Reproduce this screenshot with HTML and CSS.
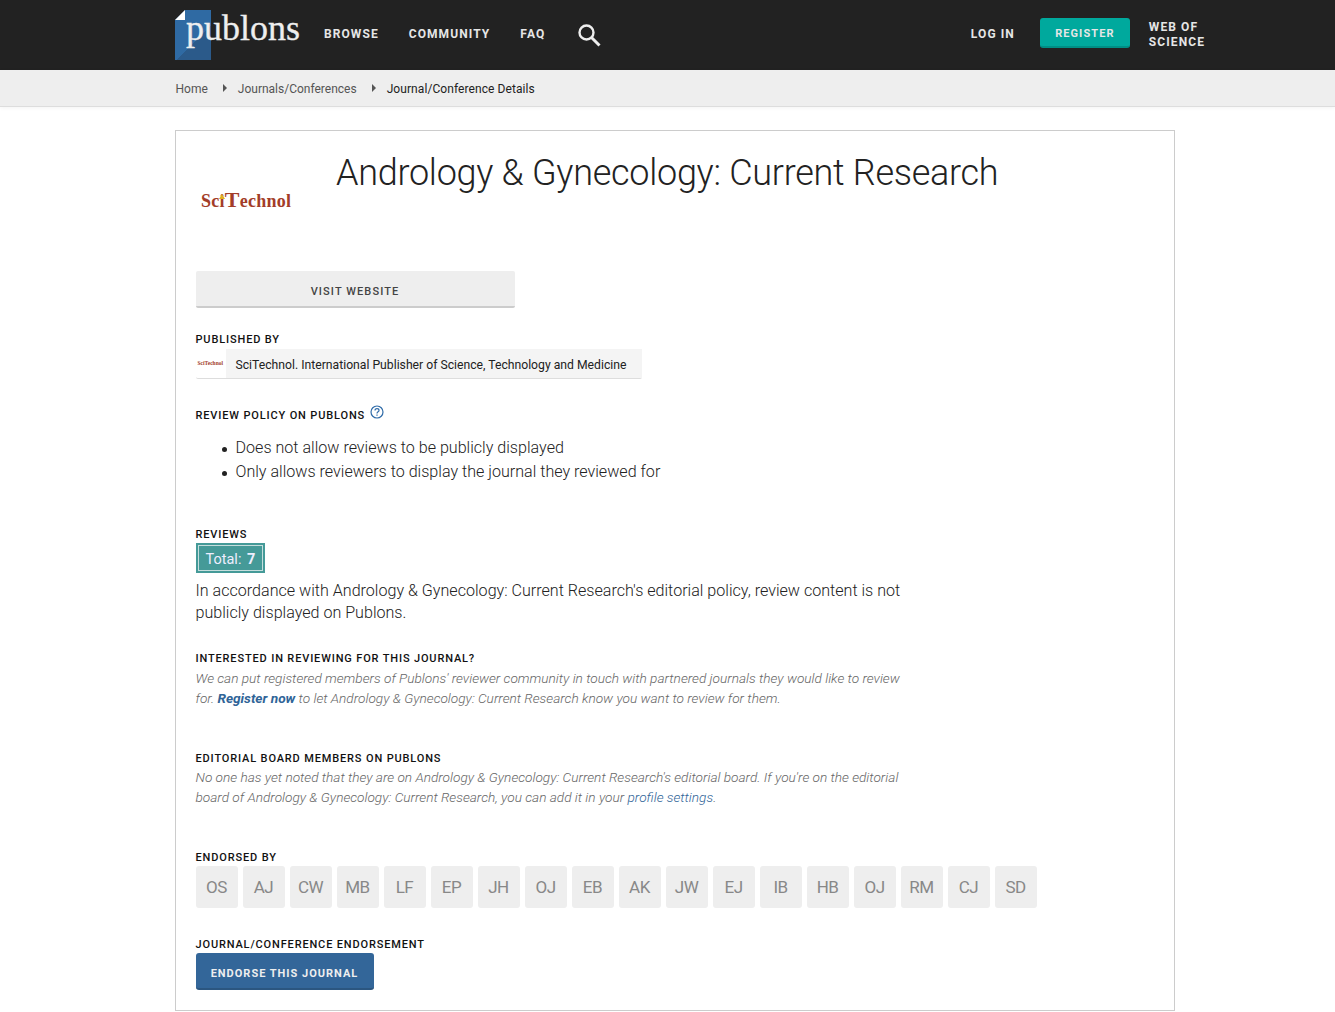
FILE: index.html
```html
<!DOCTYPE html>
<html lang="en">
<head>
    <meta charset="UTF-8">
    <meta name="viewport" content="width=device-width, initial-scale=1.0">
    <title>Andrology &amp; Gynecology: Current Research</title>
    <link rel="stylesheet" href="styles.css">
</head>
<body>

<header class="topbar">
    <div class="container topbar-inner">
        <a class="logo" href="#">
            <span class="logo-mark"></span>
            <span class="logo-text">publons</span>
        </a>
        <nav class="main-nav">
            <a href="#">Browse</a>
            <a href="#">Community</a>
            <a href="#">FAQ</a>
            <svg class="search-icon" width="24" height="24" viewBox="0 0 24 24" fill="none" stroke="#eee" stroke-width="2.4">
                <circle cx="9.5" cy="9.5" r="7"/>
                <path d="M14.5 14.5L22.5 22.5" stroke-width="3"/>
            </svg>
        </nav>
        <div class="user-nav">
            <a class="login" href="#">Log in</a>
            <a class="btn-register" href="#">Register</a>
            <a class="wos" href="#">Web of<br>Science</a>
        </div>
    </div>
</header>

<div class="breadcrumb">
    <div class="container breadcrumb-inner">
        <a href="#">Home</a>
        <span class="crumb-arrow"></span>
        <a href="#">Journals/Conferences</a>
        <span class="crumb-arrow"></span>
        <span class="crumb-current">Journal/Conference Details</span>
    </div>
</div>

<main class="container card">
    <div class="journal-head">
        <div class="journal-logo">
            <span>Sc<span class="logo-i">i</span><span class="logo-t">T</span>echnol</span>
        </div>
        <h1>Andrology &amp; Gynecology: Current Research</h1>
    </div>

    <a class="btn-visit" href="#">Visit website</a>

    <section class="published">
        <h4>Published by</h4>
        <div class="publisher">
            <span class="publisher-logo">SciTechnol</span>
            <span class="publisher-name">SciTechnol. International Publisher of Science, Technology and Medicine</span>
        </div>
    </section>

    <section class="policy">
        <h4>Review policy on Publons
            <svg class="help-icon" width="14" height="14" viewBox="0 0 14 14" fill="none" stroke="#2f6ba8" stroke-width="1.2">
                <circle cx="7" cy="7" r="6"/>
                <path d="M5 5.5C5 4.2 6 3.6 7 3.6S9 4.3 9 5.4C9 6.8 7 6.8 7 8.4"/>
                <path d="M7 9.6V10.8"/>
            </svg>
        </h4>
        <ul>
            <li>Does not allow reviews to be publicly displayed</li>
            <li>Only allows reviewers to display the journal they reviewed for</li>
        </ul>
    </section>

    <section class="reviews">
        <h4>Reviews</h4>
        <div class="total-box"><span>Total: <strong>7</strong></span></div>
        <p class="lead">In accordance with Andrology &amp; Gynecology: Current Research's editorial policy, review content is not publicly displayed on Publons.</p>
    </section>

    <section class="interested">
        <h4>Interested in reviewing for this journal?</h4>
        <p class="note">We can put registered members of Publons' reviewer community in touch with partnered journals they would like to review for. <a class="strong-link" href="#">Register now</a> to let Andrology &amp; Gynecology: Current Research know you want to review for them.</p>
    </section>

    <section class="board">
        <h4>Editorial board members on Publons</h4>
        <p class="note">No one has yet noted that they are on Andrology &amp; Gynecology: Current Research's editorial board. If you're on the editorial board of Andrology &amp; Gynecology: Current Research, you can add it in your <a href="#">profile settings</a>.</p>
    </section>

    <section class="endorsed">
        <h4>Endorsed by</h4>
        <div class="avatars">
            <span>OS</span><span>AJ</span><span>CW</span><span>MB</span><span>LF</span><span>EP</span>
            <span>JH</span><span>OJ</span><span>EB</span><span>AK</span><span>JW</span><span>EJ</span>
            <span>IB</span><span>HB</span><span>OJ</span><span>RM</span><span>CJ</span><span>SD</span>
        </div>
    </section>

    <section class="endorsement">
        <h4>Journal/Conference endorsement</h4>
        <a class="btn-endorse" href="#">Endorse this journal</a>
    </section>
</main>

</body>
</html>
```

FILE: styles.css
```css
* {
    box-sizing: border-box;
}
html, body {
    height: 1012px;
    overflow: hidden;
}
body {
    margin: 0;
    font-family: Roboto, "Liberation Sans", sans-serif;
    font-weight: 300;
    color: #222;
    background-color: #fff;
}
a {
    text-decoration: none;
    color: inherit;
}
.container {
    width: 1000px;
    margin-left: 175px;
}

/* top bar */
.topbar {
    height: 70px;
    background-color: #222;
}
.topbar-inner {
    height: 70px;
    display: flex;
    align-items: center;
}
.logo {
    position: relative;
    display: block;
    width: 149px;
    height: 70px;
    flex: none;
}
.logo-mark {
    position: absolute;
    left: 0;
    top: 10px;
    width: 36px;
    height: 50px;
    background: linear-gradient(135deg, #2f6aa3 60%, #2b5a8a 60%);
}
.logo-mark::before {
    content: "";
    position: absolute;
    left: 0;
    top: 0;
    border-style: solid;
    border-width: 10px 10px 0 0;
    border-color: #222 transparent transparent transparent;
}
.logo-mark::after {
    content: "";
    position: absolute;
    left: 0;
    top: 0;
    border-style: solid;
    border-width: 0 0 10px 10px;
    border-color: transparent transparent #fff transparent;
}
.logo-text {
    position: absolute;
    left: 11px;
    top: 8px;
    font-family: "Liberation Serif", serif;
    font-size: 36px;
    line-height: 40px;
    font-weight: 400;
    color: #eee;
    -webkit-text-stroke: 0.3px #eee;
}
.main-nav {
    display: flex;
    align-items: center;
    gap: 30px;
    flex: none;
}
.main-nav a, .user-nav a {
    font-size: 12px;
    font-weight: 700;
    letter-spacing: 1.08px;
    text-transform: uppercase;
    color: #e6e6e6;
}
.main-nav a, .user-nav .login {
    margin-bottom: 2px;
}
.search-icon {
    margin-left: 2px;
}
.user-nav {
    margin-left: auto;
    margin-right: -30px;
    display: flex;
    align-items: center;
}
.user-nav .btn-register {
    width: 90px;
    height: 30px;
    margin: 0 19px 4px 25px;
    line-height: 32px;
    text-align: center;
    font-size: 11px;
    background-color: #00a99d;
    border-bottom: 2px solid #008f85;
    border-radius: 3px;
}
.user-nav .wos {
    line-height: 15px;
}

/* breadcrumb */
.breadcrumb {
    height: 37px;
    background-color: #eee;
    border-bottom: 1px solid #ddd;
    box-shadow: 0 1px 4px rgba(0,0,0,0.05);
}
.breadcrumb-inner {
    height: 36px;
    display: flex;
    align-items: center;
    padding: 2px 0 0 0.5px;
    font-size: 12px;
    font-weight: 400;
    color: #555;
}
.crumb-arrow {
    width: 0;
    height: 0;
    margin: 0 11px 2px 15px;
    border-style: solid;
    border-width: 4px 0 4px 4px;
    border-color: transparent transparent transparent #555;
}
.crumb-current {
    color: #222;
    letter-spacing: 0.08px;
}

/* main card */
.card {
    height: 881px;
    margin-top: 23px;
    padding: 0 20px 0 19.5px;
    border: 1px solid #ccc;
}
.journal-head {
    display: flex;
    height: 140px;
}
.journal-logo {
    width: 140.5px;
    padding: 57px 0 0 5.5px;
    font-family: "Liberation Serif", serif;
    font-size: 18px;
    line-height: 24px;
    font-weight: 700;
    letter-spacing: 0.25px;
    color: #a33d29;
    flex: none;
}
.logo-i {
    position: relative;
}
.logo-i::before {
    content: "";
    position: absolute;
    left: -1px;
    top: 3px;
    border-style: solid;
    border-width: 0 3px 5px 3px;
    border-color: transparent transparent #e0b020 transparent;
}
.logo-t {
    font-size: 22px;
}
h1 {
    margin: 20px 0 0;
    font-size: 36px;
    line-height: 44px;
    font-weight: 300;
    letter-spacing: -0.28px;
    color: #222;
}
.btn-visit {
    display: block;
    width: 319px;
    height: 37px;
    line-height: 42px;
    text-align: center;
    font-size: 11px;
    font-weight: 500;
    letter-spacing: 1.1px;
    text-transform: uppercase;
    color: #444;
    background-color: #eee;
    border-bottom: 2px solid #ccc;
    border-radius: 2px;
}
h4 {
    margin: 0;
    font-size: 11px;
    line-height: 14px;
    font-weight: 500;
    letter-spacing: 0.85px;
    text-transform: uppercase;
    color: #111;
}
.published {
    margin-top: 25px;
}
.publisher {
    display: flex;
    width: 446px;
    height: 30px;
    margin-top: 2px;
    border-bottom: 1px solid #ddd;
    border-radius: 2px;
}
.publisher-logo {
    width: 30px;
    padding-left: 2px;
    font-family: "Liberation Serif", serif;
    font-size: 5.5px;
    line-height: 28px;
    font-weight: 700;
    color: #a33d29;
    flex: none;
}
.publisher-name {
    flex: 1;
    padding-left: 10px;
    font-size: 12.2px;
    line-height: 33px;
    font-weight: 400;
    color: #222;
    background-color: #f4f4f4;
}
.policy {
    margin-top: 30px;
}
.policy h4 {
    position: relative;
}
.help-icon {
    position: absolute;
    left: 174px;
    top: -4px;
}
.policy ul {
    margin: 13px 0 0;
    padding-left: 40px;
    font-size: 16.1px;
    line-height: 24px;
    list-style: none;
}
.policy li {
    position: relative;
}
.policy li::before {
    content: "";
    position: absolute;
    left: -14px;
    top: 11px;
    width: 5px;
    height: 5px;
    border-radius: 50%;
    background-color: #222;
}
.reviews {
    margin-top: 44px;
}
.total-box {
    width: 69px;
    height: 30px;
    margin-top: 1px;
    padding: 2px;
    background-color: #459a98;
}
.total-box span {
    display: block;
    height: 26px;
    padding-left: 7px;
    font-size: 14.5px;
    line-height: 27px;
    font-weight: 400;
    color: #eef;
    word-spacing: 2px;
    border: 1px solid #c5dedd;
}
.lead {
    width: 720px;
    margin: 7px 0 0;
    font-size: 16.1px;
    line-height: 22px;
    font-weight: 300;
}
.interested {
    margin-top: 28px;
}
.note {
    width: 720px;
    margin: 2px 0 0;
    font-size: 13.65px;
    line-height: 20px;
    font-style: italic;
    color: #666;
}
.note a {
    color: #2f6497;
}
.note .strong-link {
    font-weight: 700;
}
.board {
    margin-top: 44px;
}
.board .note {
    margin-top: 1px;
}
.endorsed {
    margin-top: 44px;
}
.avatars {
    display: flex;
    gap: 5px;
    margin-top: 1px;
}
.avatars span {
    width: 42px;
    height: 42px;
    line-height: 42px;
    text-align: center;
    font-size: 17px;
    font-weight: 400;
    letter-spacing: -0.5px;
    color: #888;
    background-color: #eee;
    border-radius: 3px;
}
.endorsement {
    margin-top: 30px;
}
.btn-endorse {
    display: block;
    width: 178px;
    height: 37px;
    margin-top: 1px;
    line-height: 42px;
    text-align: center;
    font-size: 11px;
    font-weight: 700;
    letter-spacing: 1px;
    text-transform: uppercase;
    color: #eee;
    background-color: #336699;
    border-bottom: 2px solid #2b5680;
    border-radius: 3px;
}
```
